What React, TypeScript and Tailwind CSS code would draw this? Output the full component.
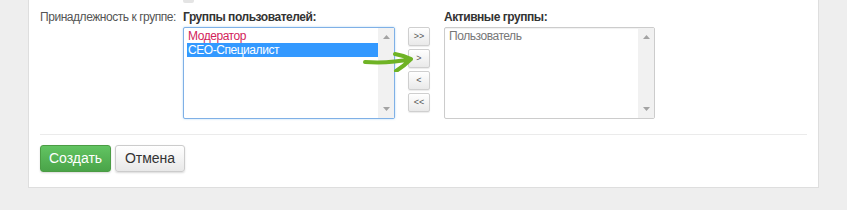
import React from 'react';

const font = { fontFamily: '"Liberation Sans", Arial, sans-serif' };

const ScrollTrack = () => (
  <div className="flex w-[16px] flex-col items-center justify-between bg-[#f1f1f1] py-[7px]">
    <svg width="7" height="4" viewBox="0 0 7 4">
      <path d="M0 4 L3.5 0 L7 4 Z" fill="#a3a3a3" />
    </svg>
    <svg width="7" height="4" viewBox="0 0 7 4">
      <path d="M0 0 L3.5 4 L7 0 Z" fill="#a3a3a3" />
    </svg>
  </div>
);

const MoveButton = ({ label }: { label: string }) => (
  <button className="flex h-[19px] w-[22px] items-center justify-center rounded-[2px] border border-[#cfcfcf] bg-gradient-to-b from-white to-[#e9e9e9] text-[9px] leading-none text-[#555] shadow-[0_1px_1px_rgba(0,0,0,0.08)]">
    {label}
  </button>
);

export default function App() {
  return (
    <div className="h-[210px] w-full bg-[#eeeeee] pl-[28px] pr-[28px]" style={font}>
      <div className="w-[791px] border-x border-b border-[#dedede] bg-white px-[11px] pb-[15px]">
        <div className="h-[3px] pl-[143px]">
          <div className="h-[3px] w-[11px] rounded-b-[2px] bg-[#e4e4e4]" />
        </div>

        <div className="mt-[7px] flex tracking-[-0.45px]">
          <div className="w-[143px] whitespace-nowrap text-[12px] leading-[14px] text-[#555]">Принадлежность к группе:</div>

          <div className="w-[212px]">
            <div className="text-[12px] font-bold leading-[14px] text-[#333]">Группы пользователей:</div>
            <div className="mt-[3px] flex h-[92px] rounded-[2px] border border-[#7fb0e6] bg-white shadow-[0_0_2px_rgba(82,168,236,0.5)]">
              <div className="flex-1 pl-[3px] pt-[1px] text-[12px] leading-[14px]">
                <div className="pl-[1px] text-[#d2235b]">Модератор</div>
                <div className="bg-[#3399ff] pl-[1px] text-white">CEO-Специалист</div>
              </div>
              <ScrollTrack />
            </div>
          </div>

          <div className="relative ml-[13px] mt-[17px] flex flex-col gap-[3px] tracking-normal">
            <MoveButton label=">>" />
            <MoveButton label=">" />
            <MoveButton label="<" />
            <MoveButton label="<<" />
            <svg
              className="pointer-events-none absolute left-[-45px] top-[19px]"
              width="52"
              height="26"
              viewBox="0 0 52 26"
            >
              <path
                d="M2 16 C18 17 34 16 48 13 M32 8 C38 9 44 11 48 13 C44 17 38 22 33 25"
                fill="none"
                stroke="#6fb325"
                strokeWidth="4"
                strokeLinecap="round"
                strokeLinejoin="round"
              />
            </svg>
          </div>

          <div className="ml-[14px] w-[211px]">
            <div className="text-[12px] font-bold leading-[14px] text-[#333]">Активные группы:</div>
            <div className="mt-[3px] flex h-[92px] rounded-[2px] border border-[#cccccc] bg-white shadow-[inset_0_1px_1px_rgba(0,0,0,0.06)]">
              <div className="flex-1 pl-[4px] pt-[1px] text-[12px] leading-[14px] text-[#777]">Пользователь</div>
              <ScrollTrack />
            </div>
          </div>
        </div>

        <div className="mt-[15px] h-px bg-[#ebebeb]" />

        <div className="mt-[10px] flex gap-[4px]">
          <button className="h-[27px] w-[71px] rounded-[3px] border border-[#4b9c44] bg-gradient-to-b from-[#62c462] to-[#4aa449] text-[14px] text-white shadow-[0_1px_2px_rgba(0,0,0,0.15)]">
            Создать
          </button>
          <button className="h-[27px] w-[70px] rounded-[3px] border border-[#cccccc] bg-gradient-to-b from-white to-[#e8e8e8] text-[14px] text-[#333] shadow-[0_1px_2px_rgba(0,0,0,0.15)]">
            Отмена
          </button>
        </div>
      </div>
    </div>
  );
}
